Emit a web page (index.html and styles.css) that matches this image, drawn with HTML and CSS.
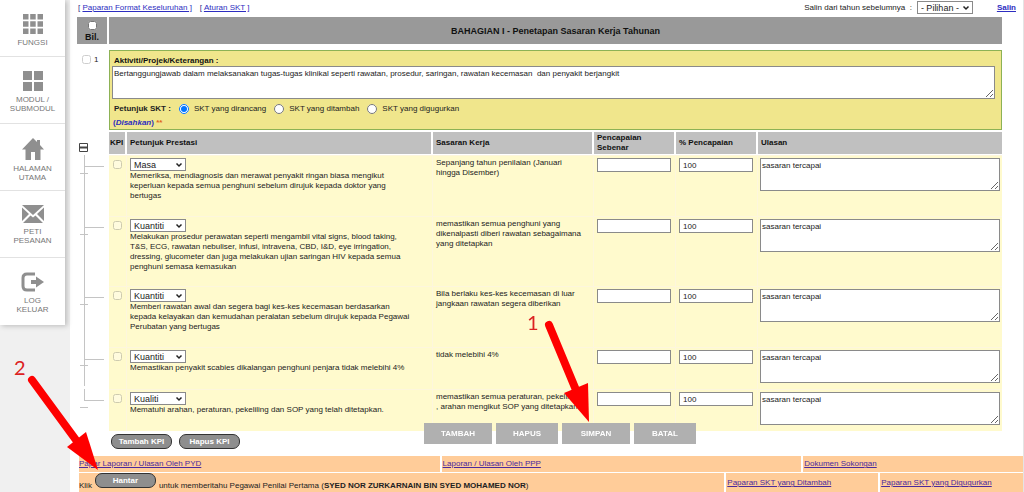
FILE: index.html
```html
<!DOCTYPE html>
<html lang="ms">
<head>
<meta charset="utf-8">
<title>Penetapan Sasaran Kerja Tahunan</title>
<link rel="stylesheet" href="styles.css">
</head>
<body>
<div class="page">
  <aside class="side">
    <nav class="menu">
      <a class="menu-item" href="#fungsi">
        <svg class="icon" width="20" height="20" viewBox="0 0 20 20"><path d="M0 0h5.500v5.500H0zM7.200 0h5.500v5.500H7.200zM14.500 0H20v5.500h-5.500zM0 7.200h5.500v5.500H0zM7.200 7.200h5.500v5.500H7.200zM14.500 7.200H20v5.500h-5.500zM0 14.500h5.500V20H0zM7.200 14.500h5.500V20H7.200zM14.500 14.500H20V20h-5.500z"/></svg>
        <span>FUNGSI</span>
      </a>
      <a class="menu-item" href="#modul">
        <svg class="icon" width="20" height="20" viewBox="0 0 20 20"><path d="M0 0h9v9H0zM11 0h9v9h-9zM0 11h9v9H0zM11 11h9v9h-9z"/></svg>
        <span>MODUL /<br>SUBMODUL</span>
      </a>
      <a class="menu-item" href="#utama">
        <svg class="icon" width="22" height="22" viewBox="0 0 22 22"><path d="M11 0l4 4V2h3v5l4 4.500h-3.500V22h-5.500v-8H9v8H3.500V11.500H0z"/></svg>
        <span>HALAMAN<br>UTAMA</span>
      </a>
      <a class="menu-item" href="#peti">
        <svg class="icon" width="22" height="18" viewBox="0 0 22 18"><path d="M0 0h22L11 10zM0 2.500L7 9 0 16zM22 2.500V16L15 9zM8.500 10.500L11 12.500l2.500-2L21 18H1z"/></svg>
        <span>PETI<br>PESANAN</span>
      </a>
      <a class="menu-item" href="#keluar">
        <svg class="icon" width="23" height="20" viewBox="0 0 23 20"><path d="M14 2H6Q2 2 2 6v8q0 4 4 4h8" fill="none" stroke="#8f8f8f" stroke-width="3"/><path d="M10 8h5V4.500l8 5.500-8 5.500V12h-5z"/></svg>
        <span>LOG<br>KELUAR</span>
      </a>
    </nav>
  </aside>

  <main class="main">
    <div class="top">
      <div class="top-links">
        <span>[ <a href="#format">Paparan Format Keseluruhan ]</a></span>
        <span>[ <a href="#aturan">Aturan SKT ]</a></span>
      </div>
      <div class="copy">
        <label for="tahun">Salin dari tahun sebelumnya &nbsp;:</label>
        <select id="tahun"><option>- Pilihan -</option></select>
        <a class="copy-link" href="#salin">Salin</a>
      </div>
    </div>

    <section class="work">
      <div class="band bil"><input type="checkbox" aria-label="Pilih semua"><span>Bil.</span></div>
      <h1 class="band title">BAHAGIAN I - Penetapan Sasaran Kerja Tahunan</h1>

      <div class="number"><input class="faint" type="checkbox" id="skt1"><label for="skt1">1</label></div>
      <div class="activity">
        <label class="strong" for="aktiviti">Aktiviti/Projek/Keterangan :</label>
        <textarea id="aktiviti">Bertanggungjawab dalam melaksanakan tugas-tugas klinikal seperti rawatan, prosedur, saringan, rawatan kecemasan  dan penyakit berjangkit</textarea>
        <div class="radios">
          <b>Petunjuk SKT :</b>
          <label><input type="radio" name="skt" checked>SKT yang dirancang</label>
          <label><input type="radio" name="skt">SKT yang ditambah</label>
          <label><input type="radio" name="skt">SKT yang digugurkan</label>
        </div>
        <div class="confirm"><a href="#sah">(<i>Disahkan</i>)</a> <span class="stars">**</span></div>
      </div>

      <div class="tree">
        <svg width="30" height="300" viewBox="0 0 30 300" fill="none" stroke="#c4c4c4">
          <path d="M7.500 23v231M7.500 257v12M7.500 34.500H27M3 41.500h8M7.500 95.500H27M3 102.500h8M7.500 165.500H27M3 172.500h8M7.500 227.500H27M3 233.500h8M7.500 268.500H27M3 275.500h8"/>
          <path d="M2.500 11.500h8v8h-8z" stroke="#444"/><path d="M3 15.500h7" stroke="#444" stroke-width="2"/>
        </svg>
      </div>
      <table class="kpi">
        <colgroup><col class="c-kpi"><col><col class="c-target"><col class="c-real"><col class="c-real"><col class="c-note"></colgroup>
        <thead>
          <tr><th>KPI</th><th>Petunjuk Prestasi</th><th>Sasaran Kerja</th><th>Pencapaian<br>Sebenar</th><th>% Pencapaian</th><th>Ulasan</th></tr>
        </thead>
        <tbody>
          <tr class="row-mid">
            <td><input class="faint" type="checkbox" aria-label="KPI 1"></td>
            <td><select aria-label="Petunjuk 1"><option>Masa</option></select><p>Memeriksa, mendiagnosis dan merawat penyakit ringan biasa mengikut keperluan kepada semua penghuni sebelum dirujuk kepada doktor yang bertugas</p></td>
            <td class="target">Sepanjang tahun penilaian (Januari hingga Disember)</td>
            <td><input type="text" aria-label="Pencapaian sebenar 1"></td>
            <td><input type="text" value="100" aria-label="Peratus 1"></td>
            <td><textarea aria-label="Ulasan 1">sasaran tercapai</textarea></td>
          </tr>
          <tr class="row-tall">
            <td><input class="faint" type="checkbox" aria-label="KPI 2"></td>
            <td><select aria-label="Petunjuk 2"><option>Kuantiti</option></select><p>Melakukan prosedur perawatan seperti mengambil vital signs, blood taking, T&amp;S, ECG, rawatan nebuliser, infusi, intravena, CBD, I&amp;D, eye irringation, dressing, glucometer dan juga melakukan ujian saringan HIV kepada semua penghuni semasa kemasukan</p></td>
            <td class="target">memastikan semua penghuni yang dikenalpasti diberi rawatan sebagaimana yang ditetapkan</td>
            <td><input type="text" aria-label="Pencapaian sebenar 2"></td>
            <td><input type="text" value="100" aria-label="Peratus 2"></td>
            <td><textarea aria-label="Ulasan 2">sasaran tercapai</textarea></td>
          </tr>
          <tr class="row-mid">
            <td><input class="faint" type="checkbox" aria-label="KPI 3"></td>
            <td><select aria-label="Petunjuk 3"><option>Kuantiti</option></select><p>Memberi rawatan awal dan segera bagi kes-kes kecemasan berdasarkan kepada kelayakan dan kemudahan peralatan sebelum dirujuk kepada Pegawai Perubatan yang bertugas</p></td>
            <td class="target">Bila berlaku kes-kes kecemasan di luar jangkaan rawatan segera diberikan</td>
            <td><input type="text" aria-label="Pencapaian sebenar 3"></td>
            <td><input type="text" value="100" aria-label="Peratus 3"></td>
            <td><textarea aria-label="Ulasan 3">sasaran tercapai</textarea></td>
          </tr>
          <tr>
            <td><input class="faint" type="checkbox" aria-label="KPI 4"></td>
            <td><select aria-label="Petunjuk 4"><option>Kuantiti</option></select><p>Memastikan penyakit scabies dikalangan penghuni penjara tidak melebihi 4%</p></td>
            <td class="target">tidak melebihi 4%</td>
            <td><input type="text" aria-label="Pencapaian sebenar 4"></td>
            <td><input type="text" value="100" aria-label="Peratus 4"></td>
            <td><textarea aria-label="Ulasan 4">sasaran tercapai</textarea></td>
          </tr>
          <tr>
            <td><input class="faint" type="checkbox" aria-label="KPI 5"></td>
            <td><select aria-label="Petunjuk 5"><option>Kualiti</option></select><p>Mematuhi arahan, peraturan, pekeliling dan SOP yang telah ditetapkan.</p></td>
            <td class="target">memastikan semua peraturan, pekeliling , arahan mengikut SOP yang ditetapkan</td>
            <td><input type="text" aria-label="Pencapaian sebenar 5"></td>
            <td><input type="text" value="100" aria-label="Peratus 5"></td>
            <td><textarea aria-label="Ulasan 5">sasaran tercapai</textarea></td>
          </tr>
        </tbody>
      </table>
      <div class="kpi-actions">
        <button class="pill" type="button">Tambah KPI</button>
        <button class="pill" type="button">Hapus KPI</button>
      </div>
    </section>

    <footer class="foot">
      <div class="foot-row reports">
        <div><a href="#pyd">Papar Laporan / Ulasan Oleh PYD</a></div>
        <div><a href="#ppp">Laporan / Ulasan Oleh PPP</a></div>
        <div><a href="#dokumen">Dokumen Sokongan</a></div>
      </div>
      <div class="foot-row submit">
        <div class="send"><span>Klik</span><button class="pill" type="button">Hantar</button><span>untuk memberitahu Pegawai Penilai Pertama (<b>SYED NOR ZURKARNAIN BIN SYED MOHAMED NOR</b>)</span></div>
        <div><a href="#ditambah">Paparan SKT yang Ditambah</a></div>
        <div><a href="#digugurkan">Paparan SKT yang Digugurkan</a></div>
      </div>
    </footer>
  </main>
</div>

<div class="toolbar">
  <button class="w-l" type="button">TAMBAH</button>
  <button class="w-m" type="button">HAPUS</button>
  <button class="w-l" type="button">SIMPAN</button>
  <button class="w-m" type="button">BATAL</button>
</div>

<svg class="pointer p-one" width="50" height="106" viewBox="0 0 50 106"><path d="M6 7L33 72" stroke="#fe0000" stroke-width="8" stroke-linecap="round"/><path d="M21 75L45 65 46 104z" fill="#fe0000"/></svg>
<span class="mark m-one">1</span>
<svg class="pointer p-two" width="72" height="97" viewBox="0 0 72 97"><path d="M5 6L49 66" stroke="#fe0000" stroke-width="8" stroke-linecap="round"/><path d="M40 73L59 58 71 96z" fill="#fe0000"/></svg>
<span class="mark m-two">2</span>
</body>
</html>
```
FILE: styles.css
```css
* { box-sizing: border-box; }
body {
  margin: 0;
  font: 8px/10px "Liberation Sans", Arial, sans-serif;
  color: #222;
  background: #fff;
}
a { color: #2d2dc0; }
input, select, textarea, button { font-family: inherit; margin: 0; }
.page { display: flex; min-height: 100vh; position: relative; overflow: hidden; }

.side { width: 70px; flex: none; background: #f0f0f0; }
.menu { width: 65px; background: #fff; box-shadow: 2px 1px 5px #bbb; }
.menu-item {
  display: flex; flex-direction: column; align-items: center; gap: 4px;
  height: 67px; padding-top: 14px;
  border-bottom: 1px solid #e2e2e2;
  color: #777; text-align: center; text-decoration: none; line-height: 9px;
}
.menu-item:first-child { height: 57px; }
.menu-item:last-child { border: 0; }
.icon { flex: none; fill: #8f8f8f; }

.main { flex: 1; min-width: 0; border-right: 1px solid #e4e4e4; }
.top { display: flex; justify-content: space-between; height: 17px; padding: 0 7px 0 8px; }
.top-links { display: flex; gap: 8px; padding-top: 3px; color: #2d2d80; }
.copy { display: flex; align-items: center; gap: 5px; height: 15px; }
.copy-link { margin-left: 19px; font-weight: bold; }
select {
  appearance: none;
  display: block; width: 56px; height: 13px; padding: 0 0 0 3px;
  font-size: 9px; line-height: 10px; color: #222;
  border: 1px solid #8a8a8a; border-radius: 0;
  background: #fff url("data:image/svg+xml,%3Csvg xmlns='http://www.w3.org/2000/svg' width='8' height='6'%3E%3Cpath d='M1.500 1.500L4 4l2.500-2.500' fill='none' stroke='%23222' stroke-width='1.500'/%3E%3C/svg%3E") no-repeat right 2px center;
}

.work {
  display: grid; grid-template-columns: 30px 1fr; column-gap: 2px;
  margin: 0 21px 0 7px;
}
.band { height: 27px; margin: 0; background: #999; color: #111; font-size: 9px; font-weight: bold; }
.bil { display: flex; flex-direction: column; align-items: center; gap: 2px; padding-top: 4px; }
.title { display: flex; align-items: center; justify-content: center; }
input[type="checkbox"] { display: block; width: 9px; height: 9px; }
input[type="radio"] { width: 10px; height: 10px; margin-right: 5px; }
.faint { opacity: 0.35; }
.number { display: flex; gap: 3px; padding: 11px 0 0 5px; }
.activity {
  margin: 6px 0 2px; padding: 5px 6px 1px 2px;
  background: #f0e68c; border: 1px solid #8db255;
}
.strong { display: block; padding-left: 2px; font-weight: bold; color: #111; }
textarea {
  display: block; width: 100%; height: 33px; padding: 2px 1px;
  font-size: 8px; line-height: 10px; color: #222; background: #fff; border: 1px solid #8a8a8a; border-radius: 0;
}
.radios { display: flex; align-items: center; gap: 8px; padding: 3px 0 0 2px; height: 17px; }
.radios label { display: flex; align-items: center; }
.confirm { padding: 2px 0 0 1px; height: 12px; font-weight: bold; }
.confirm a { text-decoration: none; }
.stars { color: #e0641e; }

.tree { height: 0; }
.tree svg { display: block; }
.kpi { width: 100%; table-layout: fixed; border-collapse: separate; border-spacing: 0; }
.c-kpi { width: 18px; }
.c-target { width: 161px; }
.c-real { width: 82px; }
.c-note { width: 244px; }
.kpi th {
  height: 23px; padding: 0 3px; background: #c0c0c0; color: #111; text-align: left;
  border-right: 2px solid #fff; border-bottom: 1px solid #fff;
}
.kpi td {
  height: 42px; padding: 2px 4px 0 3px; vertical-align: top; background: #fffacd;
  border-right: 1px solid #fdf6dd; border-top: 1px solid #fdf6dd;
}
.kpi th:first-child { padding: 0 1px; }
.kpi td:first-child { padding: 4px 0 0 4px; }
.kpi th:last-child, .kpi td:last-child { border-right: 0; }
.kpi td:last-child { padding: 2px 2px 0; }
.kpi .target { padding-right: 10px; }
.kpi .row-mid td { height: 61px; }
.kpi .row-tall td { height: 70px; }
.kpi p { margin: 0; padding-right: 14px; }
input[type="text"] {
  display: block; width: 100%; height: 14px; padding: 0 3px;
  font-size: 8px; color: #222; background: #fff; border: 1px solid #8a8a8a;
}

.kpi-actions { grid-column: 2; display: flex; gap: 7px; padding: 3px 2px 7px; }
.pill {
  flex: none; width: 61px; height: 15px; padding: 0;
  border: 1px solid #333; border-radius: 7px; background: #8e8e8e;
  font-size: 8px; line-height: 10px; font-weight: bold; color: #fff;
}
.foot { display: grid; gap: 2px; margin-left: 9px; }
.foot-row { display: grid; gap: 2px; }
.foot-row > div { background: #ffcc99; padding: 3px 1px; }
.foot-row > div:first-child { padding-left: 0; }
.reports { grid-template-columns: 361fr 360fr 220fr; height: 15px; }
.submit { grid-template-columns: 646fr 152fr 143fr; height: 19px; }
.foot-row.submit > div { padding-top: 5px; }
.foot-row.submit > .send { display: flex; gap: 3px; padding: 0; align-items: flex-start; }
.send span { padding-top: 8px; white-space: nowrap; }
.foot a { color: #4a2a9c; }

.toolbar { position: fixed; left: 424px; bottom: 48px; display: flex; gap: 4px; }
.toolbar button {
  height: 21px; padding: 0; border: 0; background: #b0b0b0;
  color: #fff; font-size: 8px; font-weight: bold;
}
.w-l { width: 68px; }
.w-m { width: 62px; }

.pointer { position: absolute; pointer-events: none; }
.p-one { left: 543px; top: 318px; }
.p-two { left: 27px; top: 374px; }
.mark { position: absolute; font: 20px/20px Lato, sans-serif; color: #dc2222; }
.m-one { left: 527px; top: 312px; }
.m-two { left: 14px; top: 357px; }
```
